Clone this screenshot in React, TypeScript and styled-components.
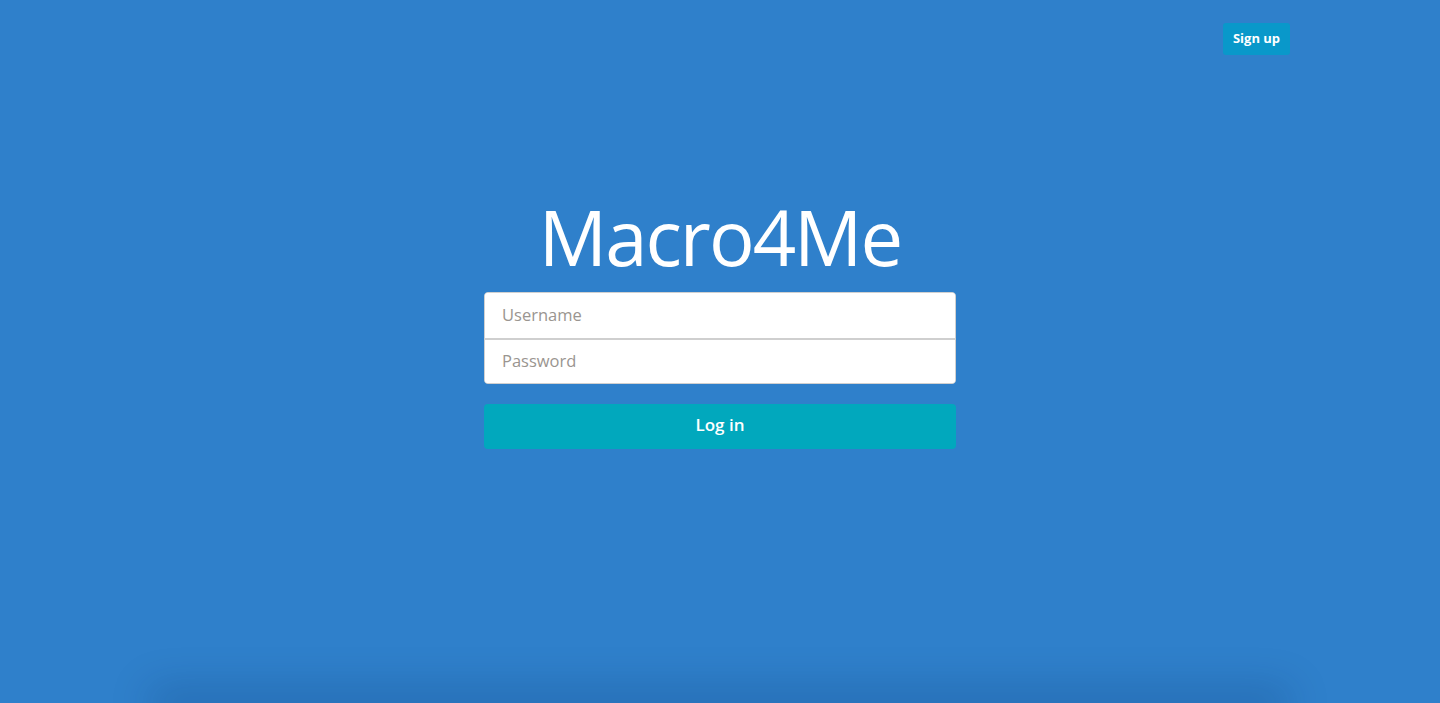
import React from "react";
import styled, { createGlobalStyle } from "styled-components";

const Global = createGlobalStyle`
  html, body { margin: 0; padding: 0; overflow: hidden; }
  body { font-family: "Open Sans", "Noto Sans", sans-serif; background: #2f80cb; }
  * { box-sizing: border-box; }
`;

const Page = styled.div`
  height: 100vh;
  background: #2f80cb;
  display: flex;
  flex-direction: column;
`;

const Header = styled.header`
  width: 1140px;
  margin: 0 auto;
  padding-top: 23px;
  display: flex;
  justify-content: flex-end;
`;

const SignUp = styled.button`
  height: 32px;
  width: 67px;
  border: none;
  border-radius: 3px;
  background: #0998ca;
  color: #fff;
  font-family: "Open Sans", sans-serif;
  font-weight: 700;
  font-size: 13px;
  cursor: pointer;
  padding: 0 0 2px;
`;

const Main = styled.main`
  display: flex;
  flex-direction: column;
  align-items: center;
  margin-top: 141px;
`;

const Title = styled.h1`
  margin: 0;
  font-family: "Open Sans", sans-serif;
  font-weight: 400;
  font-size: 76px;
  line-height: 82px;
  color: #fff;
  letter-spacing: -2px;
`;

const Form = styled.form`
  width: 472px;
  margin-top: 14px;
  display: flex;
  flex-direction: column;
`;

const FieldGroup = styled.div`
  border: 1px solid #d0d0d0;
  border-radius: 4px;
  background: #fff;
  overflow: hidden;
  display: flex;
  flex-direction: column;
`;

const Input = styled.input<{ $divider?: boolean }>`
  height: 45px;
  border: none;
  border-top: ${(p) => (p.$divider ? "2px solid #cfcfcf" : "none")};
  padding: 0 17px 3px;
  font-family: "Open Sans", sans-serif;
  font-size: 16.5px;
  color: #333;
  outline: none;
  background: #fff;
  &::placeholder { color: #9a9590; }
`;

const LoginButton = styled.button`
  margin-top: 20px;
  height: 45px;
  border: none;
  border-radius: 4px;
  background: #01a8bd;
  color: #fff;
  font-family: "Open Sans", sans-serif;
  font-weight: 600;
  font-size: 17px;
  cursor: pointer;
  padding: 0 0 4px;
`;

const FooterEdge = styled.footer`
  width: 1110px;
  height: 0;
  margin: auto auto 0;
  box-shadow: 0 0 40px 15px rgba(0, 30, 80, 0.22);
`;

export default function App() {
  return (
    <>
      <Global />
      <Page>
        <Header>
          <SignUp type="button">Sign up</SignUp>
        </Header>
        <Main>
          <Title>Macro4Me</Title>
          <Form onSubmit={(e) => e.preventDefault()}>
            <FieldGroup>
              <Input placeholder="Username" />
              <Input $divider type="password" placeholder="Password" />
            </FieldGroup>
            <LoginButton type="submit">Log in</LoginButton>
          </Form>
        </Main>
        <FooterEdge />
      </Page>
    </>
  );
}
